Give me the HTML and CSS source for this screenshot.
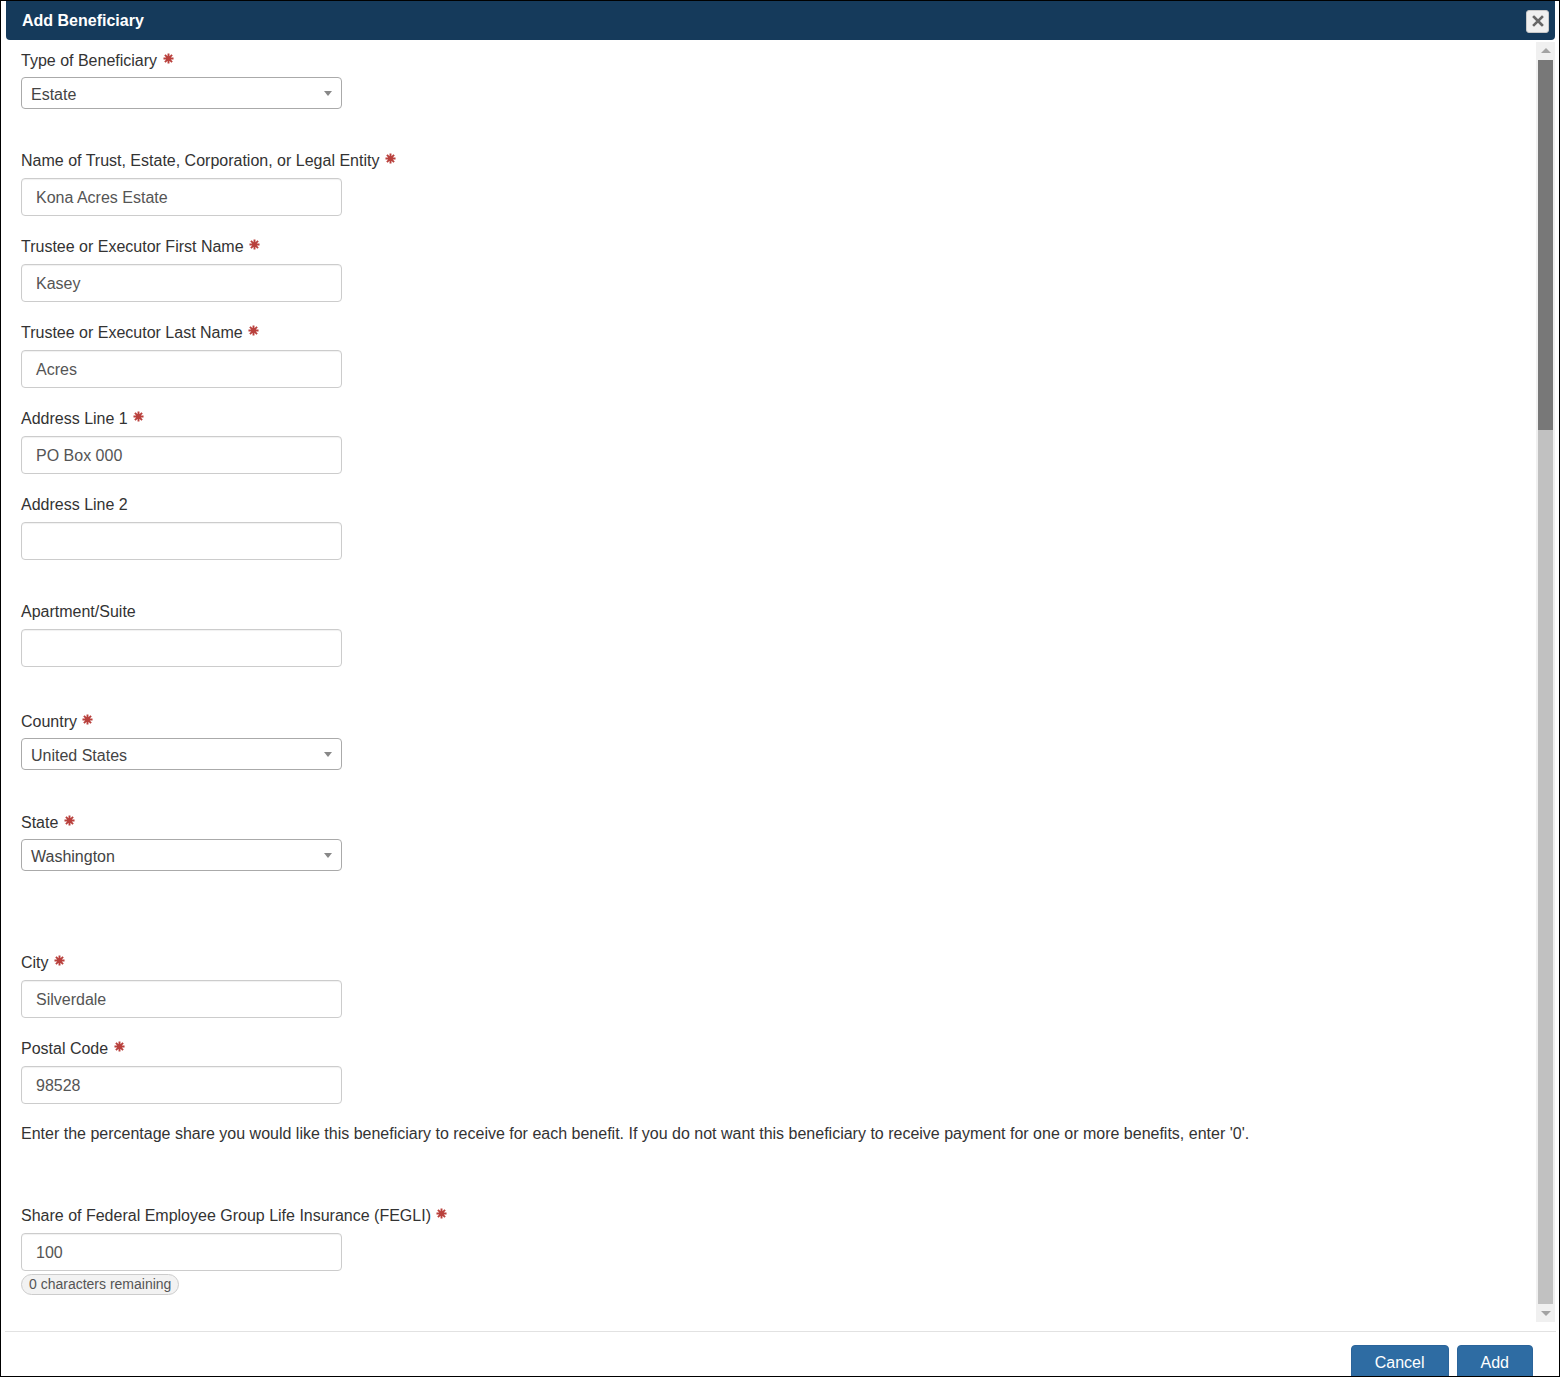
FILE: index.html
```html
<!DOCTYPE html>
<html lang="en">
<head>
  <meta charset="UTF-8">
  <title>Add Beneficiary</title>
  <link rel="stylesheet" href="styles.css">
</head>
<body>
  <svg width="0" height="0" style="position:absolute">
    <symbol id="ast" viewBox="0 0 12 12">
      <path d="M6 0.5V11.5M0.5 6H11.5M2.1 2.1L9.9 9.9M9.9 2.1L2.1 9.9" stroke="#b9403c" stroke-width="2.1"/>
    </symbol>
  </svg>

  <div class="dialog">
    <div class="dialog-header">
      <span class="dialog-title">Add Beneficiary</span>
      <button class="close-btn" type="button" aria-label="Close">
        <svg width="12" height="12" viewBox="0 0 12 12"><path d="M2 2L10 10M10 2L2 10" stroke="#666" stroke-width="2.6" stroke-linecap="square"/></svg>
      </button>
    </div>

    <div class="dialog-body">
      <div class="scroll-content">
        <div class="form-group select-group gap-md">
          <label>Type of Beneficiary <svg class="req"><use href="#ast"/></svg></label>
          <div class="select-box">Estate<span class="caret"></span></div>
        </div>

        <div class="form-group">
          <label>Name of Trust, Estate, Corporation, or Legal Entity <svg class="req"><use href="#ast"/></svg></label>
          <div class="input">Kona Acres Estate</div>
        </div>

        <div class="form-group">
          <label>Trustee or Executor First Name <svg class="req"><use href="#ast"/></svg></label>
          <div class="input">Kasey</div>
        </div>

        <div class="form-group">
          <label>Trustee or Executor Last Name <svg class="req"><use href="#ast"/></svg></label>
          <div class="input">Acres</div>
        </div>

        <div class="form-group">
          <label>Address Line 1 <svg class="req"><use href="#ast"/></svg></label>
          <div class="input">PO Box 000</div>
        </div>

        <div class="form-group gap-md">
          <label>Address Line 2</label>
          <div class="input"></div>
        </div>

        <div class="form-group gap-apt">
          <label>Apartment/Suite</label>
          <div class="input"></div>
        </div>

        <div class="form-group select-group gap-country">
          <label>Country <svg class="req"><use href="#ast"/></svg></label>
          <div class="select-box">United States<span class="caret"></span></div>
        </div>

        <div class="form-group select-group gap-lg">
          <label>State <svg class="req"><use href="#ast"/></svg></label>
          <div class="select-box">Washington<span class="caret"></span></div>
        </div>

        <div class="form-group">
          <label>City <svg class="req"><use href="#ast"/></svg></label>
          <div class="input">Silverdale</div>
        </div>

        <div class="form-group">
          <label>Postal Code <svg class="req"><use href="#ast"/></svg></label>
          <div class="input">98528</div>
        </div>

        <p class="share-note">Enter the percentage share you would like this beneficiary to receive for each benefit. If you do not want this beneficiary to receive payment for one or more benefits, enter '0'.</p>

        <div class="form-group">
          <label>Share of Federal Employee Group Life Insurance (FEGLI) <svg class="req"><use href="#ast"/></svg></label>
          <div class="input">100</div>
          <span class="char-count">0 characters remaining</span>
        </div>
      </div>

      <!-- fake scrollbar -->
      <div class="scrollbar">
        <div class="sb-arrow up"></div>
        <div class="sb-thumb"></div>
        <div class="sb-track"></div>
        <div class="sb-arrow down"></div>
      </div>
    </div>

    <div class="dialog-footer">
      <button class="btn" type="button">Cancel</button>
      <button class="btn" type="button">Add</button>
    </div>
  </div>
</body>
</html>
```

FILE: styles.css
```css
/* Page */
html, body {
  margin: 0;
  height: 100%;
  background: #fff;
}
body {
  font-family: "Liberation Sans", Arial, sans-serif;
  font-size: 16px;
  color: #333;
}
/* Dialog frame */
.dialog {
  height: 1377px;
  box-sizing: border-box;
  border: 1px solid #000;
  overflow: hidden;
  display: flex;
  flex-direction: column;
}
.dialog-header {
  height: 39px;
  margin: 0 4px 0 5px;
  background: #153a5b;
  border-radius: 0 0 4px 4px;
  display: flex;
  align-items: center;
  justify-content: space-between;
  padding: 0 6px 0 16px;
  flex-shrink: 0;
}
.dialog-title {
  color: #fff;
  font-weight: bold;
  font-size: 16px;
}
.close-btn {
  width: 23px;
  height: 23px;
  padding: 0;
  margin-top: 1px;
  border: 1px solid #c8c8c8;
  border-radius: 3px;
  background: #efefef;
  display: flex;
  align-items: center;
  justify-content: center;
}
/* Scroll area */
.dialog-body {
  height: 1282px;
  display: flex;
  flex-shrink: 0;
  margin-right: 4px;
}
.scroll-content {
  flex: 1;
  padding: 10px 20px 0;
  overflow: hidden;
}
.scrollbar {
  width: 19px;
  margin-top: 2px;
  background: #f0f0f0;
  display: flex;
  flex-direction: column;
  align-items: center;
}
.sb-arrow {
  height: 18px;
  width: 100%;
  flex-shrink: 0;
  position: relative;
}
.sb-arrow::after {
  content: "";
  position: absolute;
  left: 5px;
  border-left: 5px solid transparent;
  border-right: 5px solid transparent;
}
.sb-arrow.up::after {
  top: 6px;
  border-bottom: 5px solid #a3a3a3;
}
.sb-arrow.down::after {
  top: 7px;
  border-top: 5px solid #a3a3a3;
}
.sb-thumb {
  width: 15px;
  height: 370px;
  background: #787878;
  flex-shrink: 0;
}
.sb-track {
  width: 15px;
  flex: 1;
  background: #c1c1c1;
}
/* Form */
.form-group {
  margin-bottom: 20px;
}
.form-group.gap-md {
  margin-bottom: 41px;
}
.form-group.gap-apt {
  margin-bottom: 44px;
}
.form-group.gap-country {
  margin-bottom: 42px;
}
.form-group.gap-lg {
  margin-bottom: 81px;
}
label {
  display: block;
  line-height: 20px;
  padding-top: 1px;
  margin-bottom: 7px;
}
.select-group label {
  margin-bottom: 6px;
}
.req {
  display: inline-block;
  width: 11px;
  height: 11px;
  margin-left: 1px;
  vertical-align: 2px;
}
.input {
  width: 321px;
  height: 38px;
  box-sizing: border-box;
  border: 1px solid #ccc;
  border-radius: 4px;
  padding: 0 14px;
  line-height: 37px;
  color: #555;
  box-shadow: inset 0 1px 1px rgba(0,0,0,0.06);
}
.select-box {
  width: 321px;
  height: 32px;
  box-sizing: border-box;
  border: 1px solid #aaa;
  border-radius: 4px;
  padding: 2px 9px 0;
  line-height: 30px;
  color: #444;
  position: relative;
}
.caret {
  position: absolute;
  right: 9px;
  top: 13px;
  border-left: 4px solid transparent;
  border-right: 4px solid transparent;
  border-top: 5px solid #888;
}
.share-note {
  margin: 0 0 61px;
  line-height: 20px;
}
.char-count {
  display: inline-block;
  margin-top: 3px;
  height: 21px;
  box-sizing: border-box;
  padding: 0 7px;
  border: 1px solid #ccc;
  border-radius: 11px;
  background: #f2f2f2;
  color: #555;
  font-size: 14px;
  line-height: 19px;
}
/* Footer */
.dialog-footer {
  margin: 9px 3px 0 4px;
  border-top: 1px solid #e2e2e2;
  padding: 13px 23px 0 0;
  display: flex;
  justify-content: flex-end;
  gap: 8px;
}
.btn {
  font-family: "Liberation Sans", Arial, sans-serif;
  font-size: 16px;
  line-height: 22px;
  color: #fff;
  background: #2e6ca3;
  border: 1px solid #2b649a;
  border-radius: 4px;
  padding: 6px 23px 8px;
}
```
